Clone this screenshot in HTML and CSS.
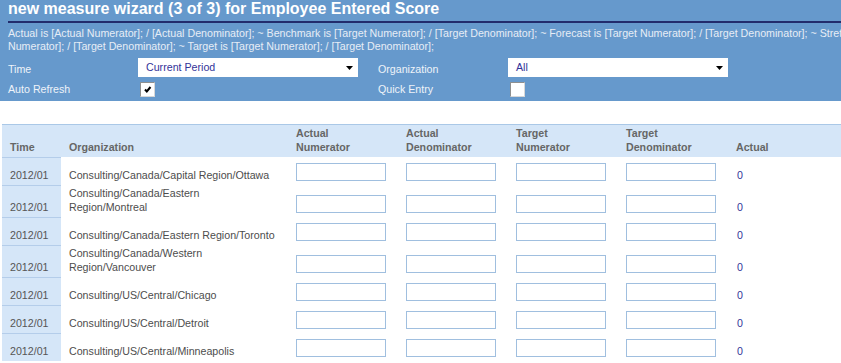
FILE: index.html
```html
<!DOCTYPE html>
<html lang="en">

<head>
    <meta charset="UTF-8" />
    <meta name="viewport" content="width=device-width, initial-scale=1.0" />
    <title>new measure wizard (3 of 3)</title>
    <link rel="stylesheet" href="styles.css">
</head>

<body>
    <div class="wizard-head">
        <h1 class="wizard-title">new measure wizard (3 of 3) for Employee Entered Score</h1>
        <p class="formula">Actual is [Actual Numerator]; / [Actual Denominator]; ~ Benchmark is [Target Numerator]; / [Target Denominator]; ~ Forecast is [Target Numerator]; / [Target Denominator]; ~ Stretch Target is [Target Numerator]; / [Target Denominator]; ~ Target is [Target Numerator]; / [Target Denominator];</p>

        <div class="filters">
            <label class="filter-label">Time</label>
            <div class="select-box">
                <span>Current Period</span>
                <svg class="arrow" width="7" height="4" viewBox="0 0 7 4"><polygon points="0,0 7,0 3.5,4" fill="#000"/></svg>
            </div>
            <label class="filter-label">Organization</label>
            <div class="select-box">
                <span>All</span>
                <svg class="arrow" width="7" height="4" viewBox="0 0 7 4"><polygon points="0,0 7,0 3.5,4" fill="#000"/></svg>
            </div>

            <label class="filter-label">Auto Refresh</label>
            <div>
                <span class="checkbox">
                    <svg width="13" height="13" viewBox="0 0 13 13"><path d="M4 6.5 L5.8 8.5 L9.5 4" fill="none" stroke="#000" stroke-width="2"/></svg>
                </span>
            </div>
            <label class="filter-label">Quick Entry</label>
            <div><span class="checkbox"></span></div>
        </div>
    </div>

    <table class="scores">
        <colgroup>
            <col class="c-time">
            <col class="c-org">
            <col class="c-entry">
            <col class="c-entry">
            <col class="c-entry">
            <col class="c-entry">
            <col class="c-actual">
        </colgroup>
        <thead>
            <tr>
                <th class="time">Time</th>
                <th class="org">Organization</th>
                <th>Actual<br>Numerator</th>
                <th>Actual<br>Denominator</th>
                <th>Target<br>Numerator</th>
                <th>Target<br>Denominator</th>
                <th>Actual</th>
            </tr>
        </thead>
        <tbody>
            <tr>
                <td class="time">2012/01</td>
                <td class="org">Consulting/Canada/Capital Region/Ottawa</td>
                <td class="entry"><input type="text"></td>
                <td class="entry"><input type="text"></td>
                <td class="entry"><input type="text"></td>
                <td class="entry"><input type="text"></td>
                <td class="actual">0</td>
            </tr>
            <tr>
                <td class="time">2012/01</td>
                <td class="org">Consulting/Canada/Eastern Region/Montreal</td>
                <td class="entry"><input type="text"></td>
                <td class="entry"><input type="text"></td>
                <td class="entry"><input type="text"></td>
                <td class="entry"><input type="text"></td>
                <td class="actual">0</td>
            </tr>
            <tr>
                <td class="time">2012/01</td>
                <td class="org">Consulting/Canada/Eastern Region/Toronto</td>
                <td class="entry"><input type="text"></td>
                <td class="entry"><input type="text"></td>
                <td class="entry"><input type="text"></td>
                <td class="entry"><input type="text"></td>
                <td class="actual">0</td>
            </tr>
            <tr>
                <td class="time">2012/01</td>
                <td class="org">Consulting/Canada/Western Region/Vancouver</td>
                <td class="entry"><input type="text"></td>
                <td class="entry"><input type="text"></td>
                <td class="entry"><input type="text"></td>
                <td class="entry"><input type="text"></td>
                <td class="actual">0</td>
            </tr>
            <tr>
                <td class="time">2012/01</td>
                <td class="org">Consulting/US/Central/Chicago</td>
                <td class="entry"><input type="text"></td>
                <td class="entry"><input type="text"></td>
                <td class="entry"><input type="text"></td>
                <td class="entry"><input type="text"></td>
                <td class="actual">0</td>
            </tr>
            <tr>
                <td class="time">2012/01</td>
                <td class="org">Consulting/US/Central/Detroit</td>
                <td class="entry"><input type="text"></td>
                <td class="entry"><input type="text"></td>
                <td class="entry"><input type="text"></td>
                <td class="entry"><input type="text"></td>
                <td class="actual">0</td>
            </tr>
            <tr>
                <td class="time">2012/01</td>
                <td class="org">Consulting/US/Central/Minneapolis</td>
                <td class="entry"><input type="text"></td>
                <td class="entry"><input type="text"></td>
                <td class="entry"><input type="text"></td>
                <td class="entry"><input type="text"></td>
                <td class="actual">0</td>
            </tr>
        </tbody>
    </table>
</body>

</html>
```

FILE: styles.css
```css
/* ====== page ====== */
html,
body {
    overflow: hidden;
}

body {
    margin: 0;
    font-family: 'Liberation Sans', Arial, sans-serif;
    font-size: 8pt;
    background: #fff;
}

/* ====== blue wizard header ====== */
.wizard-head {
    background: #6699CC;
    padding: 0 0 4px 8px;
}

.wizard-title {
    margin: 0;
    padding-bottom: 3px;
    font-size: 16px;
    line-height: 18px;
    font-weight: bold;
    color: #fff;
    border-bottom: 2px solid #222C6C;
    white-space: nowrap;
}

.formula {
    width: 960px;
    margin: 4px 0 0;
    line-height: 13px;
    color: #E6EDF6;
}

.filters {
    display: grid;
    grid-template-columns: 130px 240px 130px 220px;
    grid-template-rows: 19px 15px;
    row-gap: 5px;
    margin-top: 5px;
}

.filter-label {
    align-self: end;
    padding-bottom: 1px;
    line-height: 13px;
    color: #EEF3F9;
}

.select-box {
    display: flex;
    justify-content: space-between;
    align-items: center;
    width: 220px;
    height: 19px;
    box-sizing: border-box;
    padding: 0 5px 0 8px;
    background: #fff;
    color: #333399;
    line-height: 13px;
}

.arrow {
    display: block;
}

.checkbox {
    display: block;
    width: 15px;
    height: 15px;
    box-sizing: border-box;
    margin-left: 2px;
    background: #fff;
    border: 1px solid;
    border-color: #8E8F8F #D8D8D8 #D8D8D8 #8E8F8F;
}

.checkbox svg {
    display: block;
}

/* ====== score table ====== */
.scores {
    table-layout: fixed;
    width: 934px;
    margin: 23px 0 0 2px;
    border-spacing: 0;
    border-collapse: separate;
}

.c-time {
    width: 59px;
}

.c-org {
    width: 235px;
}

.c-entry {
    width: 110px;
}

.c-actual {
    width: 200px;
}

.scores th,
.scores td {
    padding: 1px 0 3px;
    line-height: 14px;
    text-align: left;
    vertical-align: bottom;
}

.scores th {
    background: #D5E6F8;
    border-top: 1px solid #AAC8E7;
    color: #666;
    font-weight: bold;
}

.scores th.time,
.scores th.org {
    padding-left: 8px;
}

.scores td.time {
    padding-left: 8px;
    background: #D5E6F8;
    border-top: 1px solid #B4CDEA;
    color: #555;
}

.scores td.org {
    padding-left: 8px;
    padding-right: 18px;
    color: #4D4D4D;
}

.scores td.entry {
    padding: 6px 20px 4px 0;
}

.scores td.actual {
    padding-left: 1px;
    color: #333399;
}

.entry input {
    display: block;
    width: 90px;
    height: 18px;
    box-sizing: border-box;
    margin: 0;
    padding: 0 3px;
    border: 1px solid #A0BFDF;
    background: #fff;
    font: inherit;
    outline: none;
}
```
